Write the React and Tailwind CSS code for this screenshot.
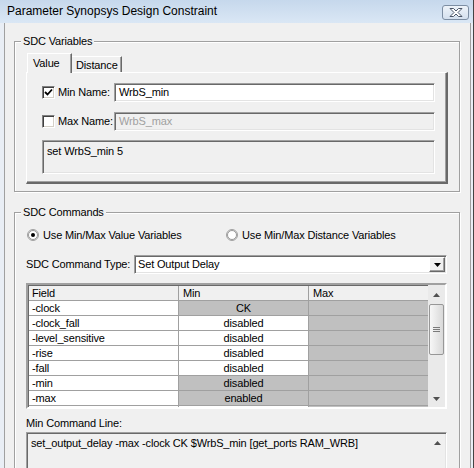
import React from "react";

const sunken =
  "border border-t-[#a0a0a0] border-l-[#a0a0a0] border-r-white border-b-white shadow-[inset_1px_1px_0_#696969,inset_-1px_-1px_0_#e3e3e3]";

function Check({ checked }) {
  return (
    <div className="w-[13px] h-[13px] shrink-0 bg-white border border-t-[#808080] border-l-[#808080] border-r-white border-b-white shadow-[inset_1px_1px_0_#404040,inset_-1px_-1px_0_#d4d0c8] flex items-center justify-center">
      {checked && (
        <svg width="9" height="9" viewBox="0 0 9 9">
          <path d="M1 4 L3.5 6.5 L8 1.5" fill="none" stroke="#000" strokeWidth="1.8" />
        </svg>
      )}
    </div>
  );
}

function Radio({ on }) {
  return (
    <svg width="12" height="12" viewBox="0 0 12 12" className="shrink-0">
      <circle cx="6" cy="6" r="5.5" fill="#f4f4f4" stroke="#a0a0a0" />
      <circle cx="6" cy="6" r="4.5" fill="#fff" stroke="#808080" strokeWidth="0.8" />
      {on && <circle cx="6" cy="6" r="2" fill="#000" />}
    </svg>
  );
}

function UpArrow() {
  return (
    <svg width="7" height="4" viewBox="0 0 7 4">
      <path d="M0 4 L3.5 0 L7 4 Z" fill="#505050" />
    </svg>
  );
}
function DownArrow({ color = "#505050" }) {
  return (
    <svg width="7" height="4" viewBox="0 0 7 4">
      <path d="M0 0 L7 0 L3.5 4 Z" fill={color} />
    </svg>
  );
}

function GroupBox({ label, className, children }) {
  return (
    <div className={"relative border border-[#a0a0a0] shadow-[1px_1px_0_#fff,inset_1px_1px_0_#fff] " + className}>
      <div className="absolute -top-[7px] left-[6px] px-[2px] bg-[#f0f0f0] leading-[13px] whitespace-nowrap">{label}</div>
      {children}
    </div>
  );
}

const rows = [
  { f: "-clock", m: "CK", mg: true },
  { f: "-clock_fall", m: "disabled", mg: false },
  { f: "-level_sensitive", m: "disabled", mg: false },
  { f: "-rise", m: "disabled", mg: false },
  { f: "-fall", m: "disabled", mg: false },
  { f: "-min", m: "disabled", mg: true },
  { f: "-max", m: "enabled", mg: true },
];

export default function App() {
  return (
    <div className="w-[474px] h-[468px] overflow-hidden bg-[#f0f0f0] flex flex-col border-r border-[#434343] font-['Liberation_Sans',Arial,sans-serif] text-[11px] text-black whitespace-nowrap">
      {/* title bar */}
      <div className="h-[23px] shrink-0 flex items-center justify-between pl-[7px] pr-[4px] bg-gradient-to-b from-[#c6d8ec] to-[#dae7f5]">
        <span className="text-[12px] leading-[14px] -mt-[1px]">Parameter Synopsys Design Constraint</span>
        <div className="w-[27px] h-[15px] mt-[1px] rounded-[3px] border border-[#7d8ea3] bg-gradient-to-b from-[#eef3f9] to-[#d4e0ee] flex items-center justify-center">
          <svg width="14" height="9" viewBox="0 0 14 9">
            <path
              d="M1 0.5 H4.5 L7 3 L9.5 0.5 H13 L9 4.5 L13 8.5 H9.5 L7 6 L4.5 8.5 H1 L5 4.5 Z"
              fill="#fff"
              stroke="#4b5668"
              strokeWidth="1"
              strokeLinejoin="round"
            />
          </svg>
        </div>
      </div>

      {/* body */}
      <div className="flex flex-1 min-h-0 tracking-[-0.15px]">
        <div className="w-[4px] shrink-0 bg-[#e9eef5]" />
        <div className="w-[467px] shrink-0 border-l border-r border-[#a0a0a0] pl-[9px] pr-[10px] pt-[18px] flex flex-col">
          {/* SDC Variables */}
          <GroupBox label="SDC Variables" className="h-[151px] shrink-0 pt-[11px] pl-[11px] pr-[11px]">
            <div className="flex items-end ml-[1px] h-[19px]">
              <div className="relative z-10 w-[45px] h-[20px] -mb-[1px] bg-[#f0f0f0] border-l border-t border-r border-l-white border-t-white border-r-[#696969] shadow-[inset_-1px_0_0_#a0a0a0] pl-[5px] pt-[3px] leading-[13px]">
                Value
              </div>
              <div className="w-[50px] h-[16px] bg-[#f0f0f0] border-t border-r border-t-white border-r-[#696969] shadow-[inset_-1px_0_0_#a0a0a0] pl-[4px] pt-[2px] leading-[13px]">
                Distance
              </div>
            </div>
            <div className="h-[112px] border border-t-white border-l-white border-r-[#696969] border-b-[#696969] border-r-2 border-b-2 shadow-[inset_-1px_-1px_0_#a0a0a0] pt-[10px] pl-[15px] pr-[11px] flex flex-col">
              <div className="flex items-center h-[19px]">
                <div className="w-[72px] shrink-0 flex items-center gap-[3px]">
                  <Check checked />
                  <span>Min Name:</span>
                </div>
                <div className={"flex-1 h-[19px] bg-white flex items-center pl-[4px] " + sunken}>WrbS_min</div>
              </div>
              <div className="flex items-center h-[19px] mt-[10px]">
                <div className="w-[72px] shrink-0 flex items-center gap-[3px]">
                  <Check />
                  <span>Max Name:</span>
                </div>
                <div className={"flex-1 h-[19px] bg-[#f0f0f0] text-[#a0a0a0] flex items-center pl-[4px] " + sunken}>WrbS_max</div>
              </div>
              <div className={"mt-[9px] h-[34px] bg-[#f0f0f0] pl-[4px] pt-[4px] leading-[13px] " + sunken}>set WrbS_min 5</div>
            </div>
          </GroupBox>

          {/* SDC Commands */}
          <GroupBox label="SDC Commands" className="mt-[20px] h-[300px] shrink-0 pt-[15px] pl-[11px] pr-[12px]">
            <div className="flex items-center h-[14px] ml-[1px]">
              <div className="w-[199px] flex items-center gap-[4px]">
                <Radio on />
                <span>Use Min/Max Value Variables</span>
              </div>
              <div className="flex items-center gap-[4px]">
                <Radio />
                <span>Use Min/Max Distance Variables</span>
              </div>
            </div>

            <div className="flex items-center mt-[13px] h-[19px]">
              <div className="w-[108px] shrink-0">SDC Command Type:</div>
              <div className={"flex-1 h-[19px] bg-white flex items-center justify-between pl-[3px] pr-[1px] " + sunken}>
                <span>Set Output Delay</span>
                <div className="w-[16px] h-[15px] bg-[#f0f0f0] border border-t-white border-l-white border-r-[#696969] border-b-[#696969] shadow-[inset_-1px_-1px_0_#a0a0a0] flex items-center justify-center">
                  <DownArrow color="#000" />
                </div>
              </div>
            </div>

            {/* table */}
            <div className="mt-[9px] h-[126px] border-2 border-t-[#a0a0a0] border-l-[#a0a0a0] border-r-white border-b-white shadow-[inset_1px_1px_0_#696969] flex overflow-hidden">
              <div className="w-[400px] pl-[1px] pt-[1px] flex flex-col">
                <div className="flex h-[15px] shrink-0 bg-[#f0f0f0] border-b border-[#a0a0a0] leading-[14px]">
                  <div className="w-[150px] border-r border-[#a0a0a0] pl-[3px]">Field</div>
                  <div className="w-[130px] border-r border-[#a0a0a0] pl-[4px]">Min</div>
                  <div className="w-[119px] pl-[4px]">Max</div>
                </div>
                {rows.map((r) => (
                  <div key={r.f} className="flex h-[15px] shrink-0 border-b border-[#a0a0a0] leading-[14px]">
                    <div className="w-[150px] bg-white border-r border-[#a0a0a0] pl-[3px]">{r.f}</div>
                    <div className={"w-[130px] border-r border-[#a0a0a0] text-center " + (r.mg ? "bg-[#c0c0c0]" : "bg-white")}>{r.m}</div>
                    <div className="w-[119px] bg-[#c0c0c0]" />
                  </div>
                ))}
                <div className="flex flex-1">
                  <div className="w-[150px] bg-white border-r border-[#a0a0a0]" />
                  <div className="w-[130px] bg-white border-r border-[#a0a0a0]" />
                  <div className="w-[119px] bg-[#c0c0c0]" />
                </div>
              </div>
              <div className="w-[17px] pt-[1px] bg-[#eaeaea] flex flex-col items-center">
                <div className="h-[17px] w-full flex items-center justify-center">
                  <UpArrow />
                </div>
                <div className="mt-[1px] w-[15px] h-[51px] rounded-[2px] border border-[#979797] bg-gradient-to-r from-[#f7f7f7] to-[#d9d9d9] flex flex-col items-center justify-center gap-[1px]">
                  <div className="w-[7px] h-px bg-[#7a7a7a]" />
                  <div className="w-[7px] h-px bg-[#7a7a7a]" />
                  <div className="w-[7px] h-px bg-[#7a7a7a]" />
                </div>
                <div className="flex-1" />
                <div className="h-[17px] w-full flex items-center justify-center">
                  <DownArrow />
                </div>
              </div>
            </div>

            <div className="mt-[8px] leading-[13px]">Min Command Line:</div>
            <div className={"mt-[2px] h-[60px] bg-[#f0f0f0] flex " + sunken}>
              <div className="flex-1 pl-[4px] pt-[4px] leading-[13px]">
                set_output_delay -max -clock CK $WrbS_min [get_ports RAM_WRB]
              </div>
              <div className="w-[17px] pt-[1px] flex justify-center">
                <div className="h-[17px] flex items-center">
                  <UpArrow />
                </div>
              </div>
            </div>
          </GroupBox>
        </div>
        <div className="w-[2px] shrink-0 bg-[#e9eef5]" />
      </div>
    </div>
  );
}
